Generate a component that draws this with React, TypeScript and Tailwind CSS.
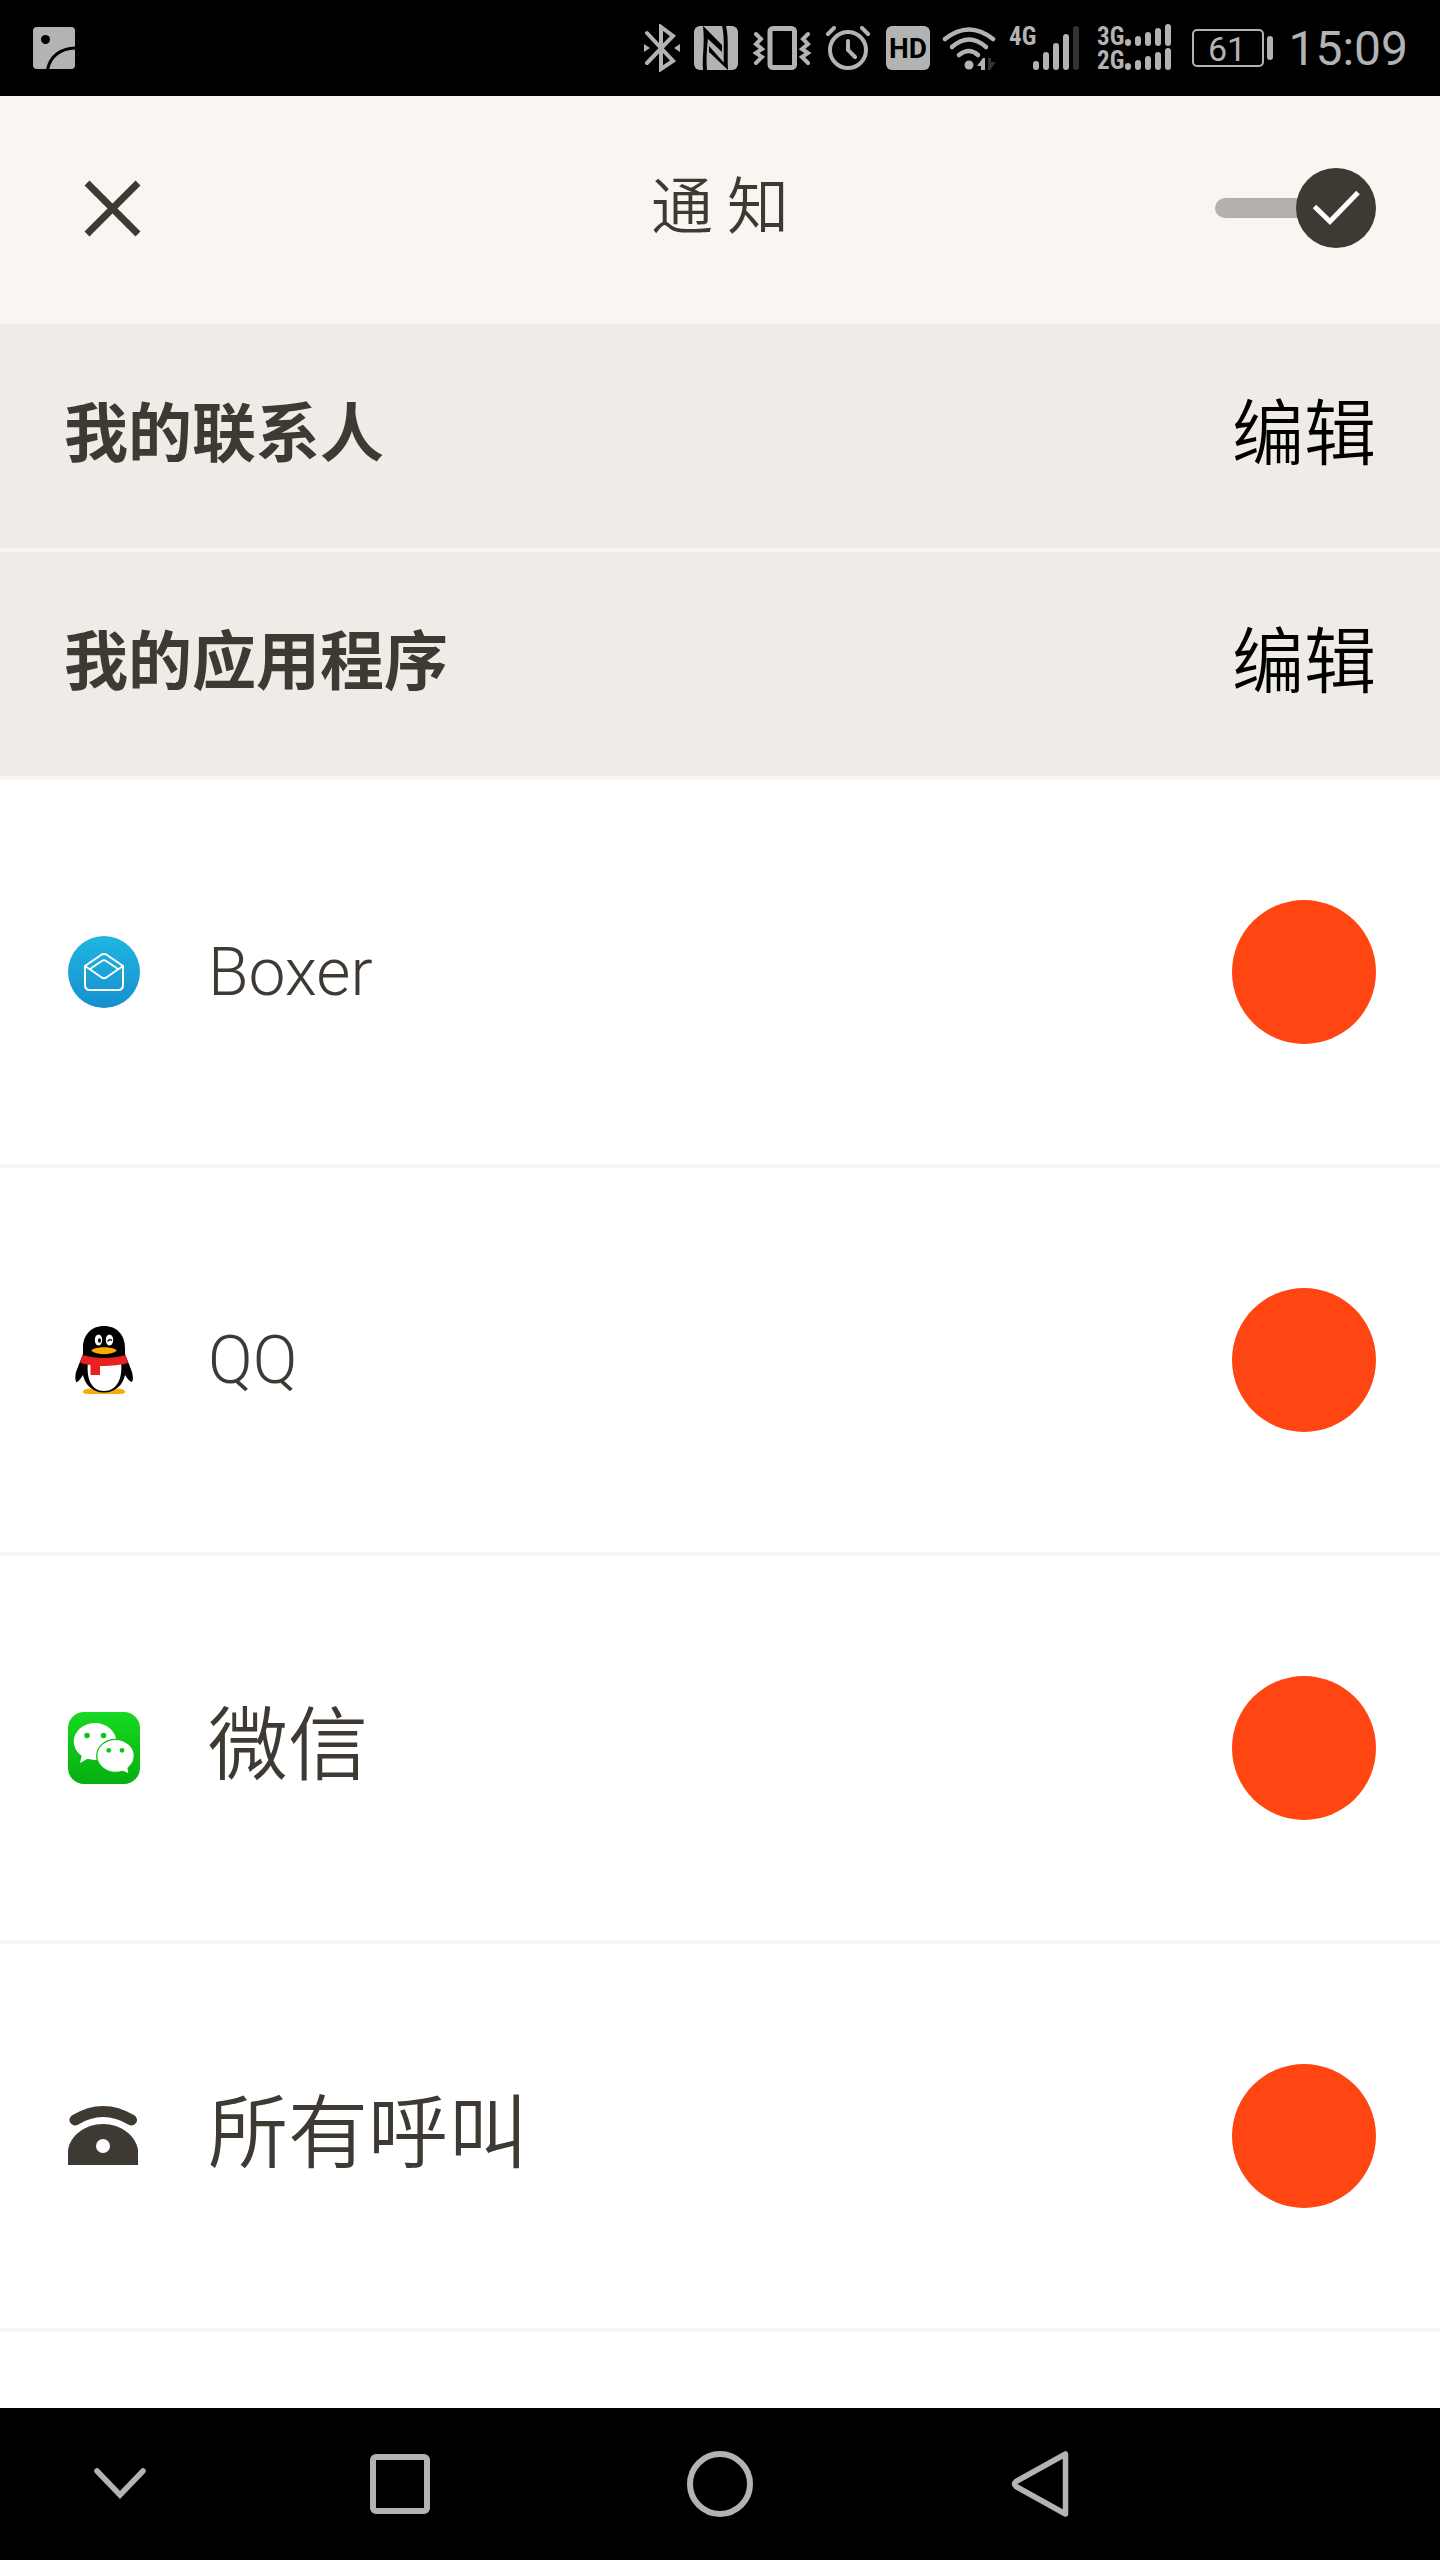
import React, { useState } from 'react';

function BluetoothIcon() {
  return (
    <svg width="36" height="48" viewBox="0 0 36 48" fill="none" stroke="#b3b3b3" strokeWidth="4">
      <path d="M3 9 29 37 17 45V3L29 12 3 39" strokeLinecap="round" />
      <path d="M0 20l6 4-6 4zM36 20l-6 4 6 4z" fill="#b3b3b3" stroke="none" />
    </svg>
  );
}

function NfcIcon() {
  return (
    <svg width="48" height="44" viewBox="-2 0 48 44">
      <rect width="44" height="44" rx="6" fill="#b3b3b3" />
      <path d="M9 0 27 19 27 23 14 11C13 24 12 32 13 44H9C8 30 11 18 9 0z" fill="#000" />
      <path d="M9 0 28 19V26L14 13zM15 20 31 38 34 44 15 26z" fill="#000" />
      <path d="M28 0h4C35 12 33 28 34 44L30 39C29 26 31 12 28 0z" fill="#000" />
    </svg>
  );
}

function VibrateIcon() {
  return (
    <svg width="60" height="44" viewBox="0 0 60 44" fill="none" stroke="#b3b3b3" strokeWidth="5" strokeLinecap="round">
      <rect x="18" y="2.5" width="24.5" height="39" rx="3" />
      <path d="M4 8l5 5-5 5 6 5-6 4 6 4-6 6M56 8l-5 5 5 5-6 5 6 4-6 4 6 6" strokeWidth="4" />
    </svg>
  );
}

function AlarmIcon() {
  return (
    <svg width="50" height="44" viewBox="0 0 50 44" fill="none" stroke="#b3b3b3" strokeWidth="4" strokeLinecap="round">
      <circle cx="24" cy="24" r="18" />
      <path d="M24 15v9l7 7M4 8l6-6M38 2l6 6" />
    </svg>
  );
}

function HdIcon() {
  return (
    <svg width="44" height="44" viewBox="0 0 44 44">
      <rect width="44" height="44" rx="6" fill="#b3b3b3" />
      <text x="22" y="32" textAnchor="middle" fontSize="28" fontWeight="700" fontFamily="Roboto, sans-serif">HD</text>
    </svg>
  );
}

function WifiIcon() {
  return (
    <svg width="54" height="44" viewBox="0 0 54 44">
      <g fill="none" stroke="#b3b3b3" strokeWidth="4.5" strokeLinecap="round">
        <path d="M3 13Q27-6 51 13" />
        <path d="M10 21Q27 6 44 21" />
        <path d="M17 29Q27 21 36 29" />
      </g>
      <circle cx="27" cy="39" r="4.5" fill="#b3b3b3" />
      <path d="M35 40l6-8h2v12h-4v-4z" fill="#b3b3b3" />
      <path d="M46 32h3v4h5l-6 8h-2z" fill="#333" />
    </svg>
  );
}

const narrow = '"Liberation Sans Narrow", "Roboto Condensed", Roboto, sans-serif';

function Signal4G() {
  const bars = [35, 26, 17, 8, 0];
  return (
    <svg width="76" height="64" viewBox="0 -10 76 64" fill="#b3b3b3">
      <text x="1" y="19" fontSize="25" fontWeight="700" fontFamily={narrow}>4G</text>
      {bars.map((top, i) => (
        <rect key={top} x={25 + i * 10} y={top} width="6" height={44 - top} rx="3" fill={i === 4 ? '#333' : '#b3b3b3'} />
      ))}
    </svg>
  );
}

function SignalDual() {
  const bars = [15, 12, 8, 4, 0];
  return (
    <svg width="84" height="68" viewBox="0 -10 84 68" fill="#b3b3b3">
      <text x="1" y="21" fontSize="25" fontWeight="700" fontFamily={narrow}>3G</text>
      <text x="1" y="45" fontSize="25" fontWeight="700" fontFamily={narrow}>2G</text>
      {[22, 46].map((bottom) =>
        bars.map((top, i) => (
          <rect key={`${bottom}-${top}`} x={29 + i * 10} y={bottom - 22 + top} width="6" height={22 - top} rx="3" />
        ))
      )}
    </svg>
  );
}

function Battery() {
  return (
    <svg width="84" height="48" viewBox="0 0 84 48" fill="#b3b3b3">
      <rect x="1" y="6" width="70" height="36" rx="4" fill="none" stroke="#b3b3b3" strokeWidth="2" />
      <rect x="75" y="12" width="6" height="24" rx="3" />
      <text x="35" y="37" textAnchor="middle" fontSize="34" fontFamily="Roboto, sans-serif">61</text>
    </svg>
  );
}

function StatusBar() {
  return (
    <div className="flex h-24 items-center justify-between bg-black pl-[33px] pr-8">
      <svg width="42" height="42" viewBox="0 0 42 42">
        <rect width="42" height="42" rx="4" fill="#b3b3b3" />
        <circle cx="12.5" cy="12.5" r="4.5" fill="#000" />
        <path d="M14.5 43C17 29 28 21 43 21" fill="none" stroke="#000" strokeWidth="3" />
      </svg>
      <div className="flex items-center gap-3">
        <BluetoothIcon />
        <NfcIcon />
        <VibrateIcon />
        <AlarmIcon />
        <HdIcon />
        <WifiIcon />
        <Signal4G />
        <SignalDual />
        <Battery />
        <span className="pt-0.5 font-[Roboto,sans-serif] text-[48px] leading-none text-[#b3b3b3]">15:09</span>
      </div>
    </div>
  );
}

function BoxerIcon() {
  return (
    <svg width="72" height="72" viewBox="0 0 72 72">
      <defs>
        <linearGradient id="boxer" x1="0" y1="0" x2="0" y2="1">
          <stop offset="0" stopColor="#20b6e0" />
          <stop offset="1" stopColor="#178fd0" />
        </linearGradient>
      </defs>
      <circle cx="36" cy="36" r="36" fill="url(#boxer)" />
      <g fill="none" stroke="#fff" strokeWidth="2" strokeLinejoin="round">
        <path d="M17 30 33 19Q36 17 39 19L55 30V49Q55 54 50 54H22Q17 54 17 49z" />
        <path d="M17 30 33 41Q36 43.5 39 41L55 30" />
        <path d="M22 33 33 25.5Q36 23 39 25.5L50 33" />
      </g>
    </svg>
  );
}

function QQIcon() {
  return (
    <svg width="72" height="72" viewBox="0 0 72 72">
      <path d="M15 68C15 64 24 64 36 67 48 64 57 64 57 68 57 70 53 70 46 70H26C19 70 15 70 15 68z" fill="#faab07" />
      <path d="M36 2C23 2 15 11 15 24L15 30 8 48C6.500 55 8 59 9 58 11 57 13 54 15 51 17 61 25 68.500 36 68.500S55 61 57 51C59 54 61 57 63.500 58 65 58 65.500 54 64 48L57 30V24C57 11 49 2 36 2z" />
      <path d="M20 38C18 54 23 67 36 67S55 54 53 38z" fill="#fff" />
      <path d="M14.500 31C28 35 44 35 57.500 31L60 39C54 41 44 42 32 42V51H22.500V41C18 40.500 14 39.500 12 38.500z" fill="#e8201f" />
      <ellipse cx="30.5" cy="16" rx="3.7" ry="5.5" fill="#fff" />
      <ellipse cx="41.5" cy="16" rx="3.7" ry="5.5" fill="#fff" />
      <ellipse cx="31.5" cy="16.5" rx="1.5" ry="2.3" />
      <path d="M39.500 17.500Q41.500 14.500 44 16.500" fill="none" stroke="#000" strokeWidth="1.3" />
      <path d="M23 26.500C27 22 45 22 49 26.500 43 31.500 29 31.500 23 26.500z" fill="#faab07" />
    </svg>
  );
}

function WeChatIcon() {
  return (
    <svg width="72" height="72" viewBox="0 0 72 72">
      <defs>
        <linearGradient id="wechat" x1="0" y1="0" x2="0" y2="1">
          <stop offset="0" stopColor="#17d922" />
          <stop offset="1" stopColor="#07ae10" />
        </linearGradient>
      </defs>
      <rect width="72" height="72" rx="16" fill="url(#wechat)" />
      <ellipse cx="27" cy="29.5" rx="21.3" ry="18.5" fill="#fff" />
      <path d="M14 42 12 51 21 46z" fill="#fff" />
      <ellipse cx="47.5" cy="43.8" rx="18.8" ry="16.5" fill="#fff" stroke="#0cc017" strokeWidth="1.3" />
      <path d="M53 58 60.300 61 59 54z" fill="#fff" />
      <g fill="#0ec41a">
        <circle cx="19" cy="23.5" r="2.8" />
        <circle cx="35.5" cy="23.5" r="2.8" />
        <circle cx="40.7" cy="38.3" r="2.4" />
        <circle cx="54" cy="38.3" r="2.4" />
      </g>
    </svg>
  );
}

function PhoneIcon() {
  return (
    <svg width="72" height="72" viewBox="0 0 72 72">
      <path d="M7 20Q35 3 63.500 20" fill="none" stroke="#3e3933" strokeWidth="11" strokeLinecap="round" />
      <path d="M0 65V50C2 36 17 24 35 24S68 36 70 50V65z" fill="#3e3933" />
      <circle cx="35" cy="46" r="7" fill="#fff" />
    </svg>
  );
}

const apps = [
  { name: 'Boxer', icon: BoxerIcon, text: 'text-[66px] pt-0.5' },
  { name: 'QQ', icon: QQIcon, text: 'text-[66px] pt-0.5' },
  { name: '微信', icon: WeChatIcon, text: 'text-[80px] pb-1' },
  { name: '所有呼叫', icon: PhoneIcon, text: 'text-[80px] pb-1' },
];

function Section({ title }: { title: string }) {
  return (
    <div className="flex h-[228px] items-center justify-between border-b-4 border-[#f9f6f1] bg-[#efebe6] px-16 pb-0.5">
      <h2 className="text-[64px] leading-none font-bold">{title}</h2>
      <button className="text-[72px] leading-none font-[350] text-black">编辑</button>
    </div>
  );
}

function App() {
  const [enabled, setEnabled] = useState(true);

  return (
    <div className="flex min-h-screen flex-col bg-white font-[Roboto,'Noto_Sans_CJK_SC',sans-serif] text-[#3e3933]">
      <StatusBar />

      {/* Header */}
      <header className="grid h-[228px] grid-cols-[1fr_auto_1fr] items-center bg-[#f9f6f1] px-16 pb-1">
        <button aria-label="关闭" className="ml-5 justify-self-start">
          <svg width="57" height="57" viewBox="0 0 57 57" stroke="#3e3933" strokeWidth="7">
            <path d="M3 3 54 54M54 3 3 54" />
          </svg>
        </button>
        <h1 className="pb-3 font-['Noto_Sans_CJK_SC',sans-serif] text-[62px] leading-none font-[350]">通 知</h1>
        <label className="relative flex cursor-pointer items-center justify-self-end">
          <input
            type="checkbox"
            aria-label="通知"
            className="peer sr-only"
            checked={enabled}
            onChange={(e) => setEnabled(e.target.checked)}
          />
          <span className="-mr-6 h-5 w-[105px] rounded-full bg-[#b3b1af]"></span>
          <svg width="80" height="80" viewBox="0 0 80 80" className="relative">
            <circle cx="40" cy="40" r="40" fill="#3e3933" />
            {enabled && <path d="M18.500 38.500 34 53.500 62 24.500" fill="none" stroke="#fff" strokeWidth="5" />}
          </svg>
        </label>
      </header>

      <Section title="我的联系人" />
      <Section title="我的应用程序" />

      {/* App list */}
      <ul className="flex-1">
        {apps.map((app) => {
          const Icon = app.icon;
          return (
            <li key={app.name} className="flex h-[388px] items-center border-b-4 border-[#f9f6f1] pr-16 pl-[68px]">
              <Icon />
              <span className={`ml-[68px] flex-1 leading-none font-[350] ${app.text}`}>{app.name}</span>
              <button aria-label={`${app.name} 颜色`} className="h-36 w-36 rounded-full bg-[#ff4612]"></button>
            </li>
          );
        })}
      </ul>

      {/* Navigation bar */}
      <nav className="grid h-[152px] grid-cols-[3fr_4fr_4fr_4fr_3fr] items-center justify-items-center bg-black">
        <button aria-label="收起">
          <svg width="52" height="32" viewBox="0 0 52 32" fill="none" stroke="#b3b3b3" strokeWidth="5.5" strokeLinecap="round">
            <path d="M3 3 26 27 49 3" />
          </svg>
        </button>
        <button aria-label="最近任务">
          <svg width="60" height="60" viewBox="0 0 60 60" fill="none" stroke="#b3b3b3" strokeWidth="6">
            <rect x="3" y="3" width="54" height="54" rx="3" />
          </svg>
        </button>
        <button aria-label="主页">
          <svg width="66" height="66" viewBox="0 0 66 66" fill="none" stroke="#b3b3b3" strokeWidth="6">
            <circle cx="33" cy="33" r="30" />
          </svg>
        </button>
        <button aria-label="返回">
          <svg width="58" height="66" viewBox="0 0 58 66" fill="none" stroke="#b3b3b3" strokeWidth="5.5" strokeLinejoin="round">
            <path d="M54.500 3V63L5 35.500Q2 33 5 30.500z" />
          </svg>
        </button>
      </nav>
    </div>
  );
}

export default App;
